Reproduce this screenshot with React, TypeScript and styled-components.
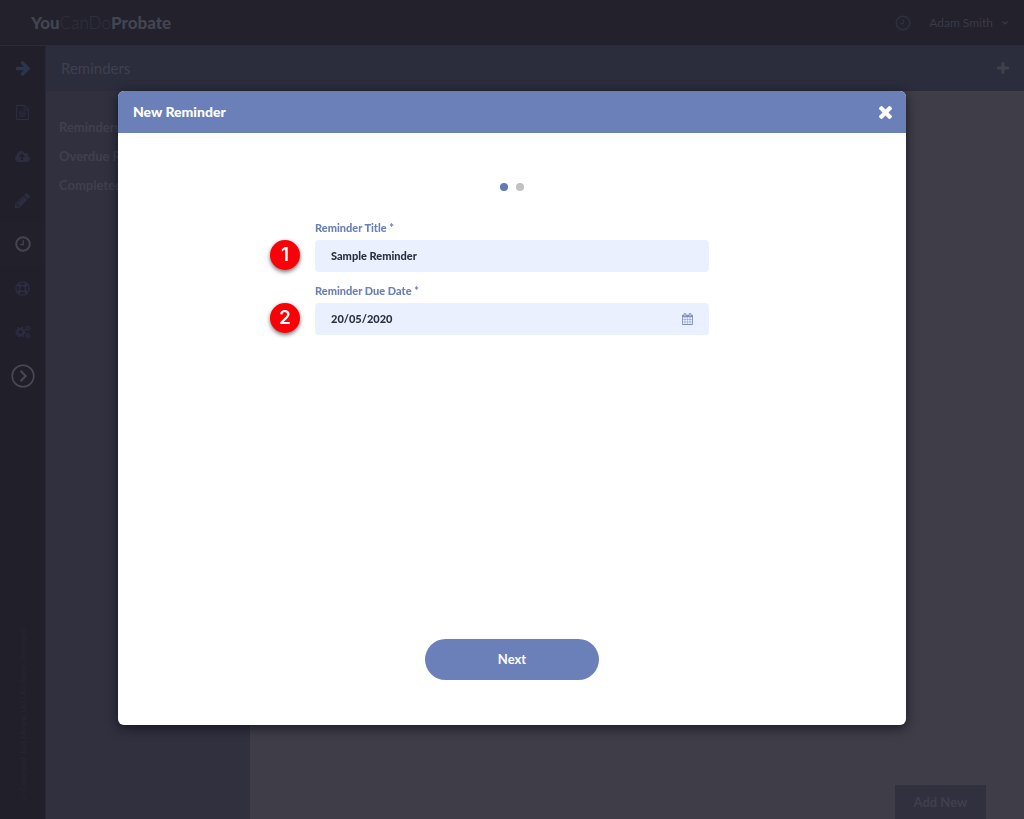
import React from "react";
import styled, { createGlobalStyle } from "styled-components";
import { FaRegLifeRing } from "react-icons/fa";

const GlobalStyle = createGlobalStyle`
  *, *::before, *::after { box-sizing: border-box; }
  html, body { margin: 0; height: 100%; }
  #root { height: 100%; }
  body {
    background: #3f3e48;
    color: #41404b;
    font-family: Lato, "Liberation Sans", sans-serif;
    font-size: 13px;
    line-height: 16px;
  }
  button, input { font: inherit; color: inherit; }
  button { border: 0; padding: 0; background: none; cursor: pointer; }
  svg { display: block; }
`;

const Page = styled.div`
  min-height: 100%;
  display: flex;
  flex-direction: column;
`;

const TopBar = styled.header`
  display: flex;
  align-items: center;
  justify-content: space-between;
  height: 46px;
  padding: 0 15px 0 31px;
  background: #22212c;
  border-bottom: 1px solid #2a2b3a;
`;

const Logo = styled.a`
  color: #454451;
  font-size: 17px;
  font-weight: 900;
  line-height: 20px;
  text-decoration: none;
`;

const LogoLight = styled.span`
  color: #33323e;
  font-weight: 300;
`;

const Account = styled.div`
  display: flex;
  align-items: center;
  gap: 18px;
`;

const AccountButton = styled.button`
  display: flex;
  align-items: center;
  gap: 8px;
  font-size: 12px;
  color: #3c3b47;
`;

const IconButton = styled.button<{ $color: string }>`
  display: flex;
  align-items: center;
  justify-content: center;
  color: ${(p) => p.$color};
`;

const Shell = styled.div`
  flex: 1;
  display: flex;
`;

const Rail = styled.nav`
  display: flex;
  flex-direction: column;
  width: 46px;
  background: #201f2a;
  border-right: 1px solid #282836;
`;

const RailItem = styled.a<{ $active?: boolean; $color?: string }>`
  display: flex;
  align-items: center;
  justify-content: center;
  height: 44px;
  color: ${(p) => p.$color ?? "#2b2d40"};
  background: ${(p) => (p.$active ? "#22212b" : "transparent")};
`;

const Copyright = styled.small`
  writing-mode: vertical-rl;
  transform: rotate(180deg);
  align-self: center;
  margin: auto 0 16px;
  color: #272632;
  font-size: 8px;
  line-height: 12px;
  white-space: nowrap;
`;

const Main = styled.main`
  flex: 1;
  display: flex;
  flex-direction: column;
`;

const TitleBar = styled.div`
  display: flex;
  align-items: center;
  justify-content: space-between;
  height: 45px;
  padding: 0 15px 2px;
  background: #2b2c3c;
`;

const PageTitle = styled.h1`
  margin: 0;
  color: #40404e;
  font-size: 15px;
  font-weight: 400;
  line-height: 20px;
`;

const Content = styled.div`
  flex: 1;
  display: flex;
`;

const SideMenu = styled.nav`
  display: flex;
  flex-direction: column;
  gap: 13px;
  width: 204px;
  padding: 28px 13px;
  background: #30303f;
`;

const SideLink = styled.a`
  color: #40404d;
  font-weight: 700;
  text-decoration: none;
`;

const Workspace = styled.section`
  flex: 1;
  display: flex;
  align-items: flex-end;
  justify-content: flex-end;
  padding-right: 38px;
  background: #3f3e48;
`;

const AddButton = styled.button`
  width: 91px;
  height: 34px;
  background: #30303f;
  color: #40404d;
  font-weight: 700;
`;

const Overlay = styled.div`
  position: fixed;
  inset: 0;
  display: flex;
  align-items: flex-start;
  justify-content: center;
  padding: 91px 118px 94px;
`;

const Dialog = styled.section`
  display: flex;
  flex-direction: column;
  width: 100%;
  height: 100%;
  overflow: hidden;
  border-radius: 6px;
  background: #fff;
  box-shadow: 0 3px 12px rgba(10, 10, 20, 0.7);
`;

const DialogHeader = styled.header`
  display: flex;
  align-items: center;
  justify-content: space-between;
  height: 42px;
  padding: 0 14px 0 15px;
  background: #6b80b8;
  color: #fff;
`;

const DialogTitle = styled.h2`
  margin: 0;
  font-size: 14px;
  font-weight: 900;
  line-height: 20px;
`;

const DialogBody = styled.form`
  flex: 1;
  display: flex;
  flex-direction: column;
  align-items: center;
  padding: 50px 0 45px;
`;

const Steps = styled.div`
  display: flex;
  gap: 8px;
`;

const Dot = styled.span<{ $active?: boolean }>`
  width: 8px;
  height: 8px;
  border-radius: 50%;
  background: ${(p) => (p.$active ? "#6179b8" : "#c1c1c3")};
`;

const Fields = styled.div`
  display: flex;
  flex-direction: column;
  gap: 11px;
  width: 50%;
  margin-top: 29px;
`;

const Field = styled.div`
  position: relative;
  display: flex;
  flex-direction: column;
  gap: 4px;
`;

const Label = styled.label`
  color: #6b80b8;
  font-size: 11px;
  font-weight: 900;
`;

const InputBox = styled.div`
  display: flex;
  align-items: center;
  height: 32px;
  padding: 0 16px;
  border-radius: 4px;
  background: #eaf0fd;
  color: #2d3040;
`;

const Input = styled.input`
  flex: 1;
  min-width: 0;
  padding: 0;
  border: 0;
  outline: 0;
  background: transparent;
  font-size: 11px;
  font-weight: 900;
`;

const Marker = styled.span`
  position: absolute;
  left: -45px;
  bottom: 2px;
  display: flex;
  align-items: center;
  justify-content: center;
  width: 30px;
  height: 30px;
  border-radius: 50%;
  background: #fb0007;
  color: #fff;
  font-family: Inter, "Liberation Sans", sans-serif;
  font-size: 19px;
  font-weight: 600;
  line-height: 24px;
  box-shadow: 0 2px 4px rgba(0, 0, 0, 0.55);
`;

const NextButton = styled.button`
  width: 174px;
  height: 41px;
  margin-top: auto;
  padding-bottom: 2px;
  border-radius: 21px;
  background: #6b80b8;
  color: #fff;
  font-weight: 700;
`;

type GlyphProps = { box: string; width: number; height: number; d: string };

const Glyph = ({ box, width, height, d }: GlyphProps) => (
  <svg viewBox={box} width={width} height={height} fill="currentColor" aria-hidden="true">
    <path d={d} />
  </svg>
);

const glyphs = {
  arrow: "M1472 960q0 54-37 91l-651 651q-39 37-91 37-51 0-90-37l-75-75q-38-38-38-91t38-91l293-293H117q-52 0-84.5-37.5T0 1024V896q0-53 32.5-90.5T117 768h704L528 474q-38-36-38-90t38-90l75-75q38-38 90-38 53 0 91 38l651 651q37 35 37 90z",
  file: "M1468 380q28 28 48 76t20 88v1152q0 40-28 68t-68 28H96q-40 0-68-28t-28-68V96q0-40 28-68T96 0h896q40 0 88 20t76 48zm-444-244v376h376q-10-29-22-41l-313-313q-12-12-41-22zm384 1528V640H992q-40 0-68-28t-28-68V128H128v1536h1280zM384 800q0-14 9-23t23-9h704q14 0 23 9t9 23v64q0 14-9 23t-23 9H416q-14 0-23-9t-9-23v-64zm736 224q14 0 23 9t9 23v64q0 14-9 23t-23 9H416q-14 0-23-9t-9-23v-64q0-14 9-23t23-9h704zm0 256q14 0 23 9t9 23v64q0 14-9 23t-23 9H416q-14 0-23-9t-9-23v-64q0-14 9-23t23-9h704z",
  cloud: "M1280 928q0-14-9-23L919 553q-9-9-23-9t-23 9L522 904q-10 12-10 24 0 14 9 23t23 9h224v352q0 13 9.500 22.500t22.500 9.500h192q13 0 22.500-9.500t9.500-22.500V960h224q13 0 22.500-9.500t9.500-22.500zm640 288q0 159-112.500 271.500T1536 1600H448q-185 0-316.500-131.500T0 1152q0-130 70-240t188-165q-2-30-2-43 0-212 150-362t362-150q156 0 285.500 87t188.500 231q71-62 166-62 106 0 181 75t75 181q0 76-41 138 130 31 213.500 135.500T1920 1216z",
  pencil: "M363 1536l91-91-235-235-91 91v107h128v128h107zm523-928q0-22-22-22-10 0-17 7l-542 542q-7 7-7 17 0 22 22 22 10 0 17-7l542-542q7-7 7-17zm-54-192l416 416-832 832H0v-416zm683 96q0 53-37 90l-166 166-416-416 166-165q36-38 90-38 53 0 91 38l235 234q37 39 37 91z",
  times: "M1298 1322q0 40-28 68l-136 136q-28 28-68 28t-68-28l-294-294-294 294q-28 28-68 28t-68-28L138 1390q-28-28-28-68t28-68l294-294-294-294q-28-28-28-68t28-68l136-136q28-28 68-28t68 28l294 294 294-294q28-28 68-28t68 28l136 136q28 28 28 68t-28 68L976 960l294 294q28 28 28 68z",
  calendar: "M128 1664h288v-288H128v288zm352 0h320v-288H480v288zM128 1312h288V992H128v320zm352 0h320V992H480v320zM128 928h288V640H128v288zm736 736h320v-288H864v288zM480 928h320V640H480v288zm768 736h288v-288h-288v288zM864 1312h320V992H864v320zM512 448V160q0-13-9.500-22.500T480 128h-64q-13 0-22.500 9.500T384 160v288q0 13 9.500 22.500T416 480h64q13 0 22.500-9.500T512 448zm736 864h288V992h-288v320zM864 928h320V640H864v288zm384 0h288V640h-288v288zm32-480V160q0-13-9.500-22.500T1248 128h-64q-13 0-22.500 9.500T1152 160v288q0 13 9.500 22.500t22.500 9.500h64q13 0 22.500-9.500t9.500-22.500zm384-64v1280q0 52-38 90t-90 38H128q-52 0-90-38t-38-90V384q0-52 38-90t90-38h128v-96q0-66 47-113T416 0h64q66 0 113 47t47 113v96h384v-96q0-66 47-113T1184 0h64q66 0 113 47t47 113v96h128q52 0 90 38t38 90z",
};

const Clock = ({ stroke }: { stroke: number }) => (
  <svg width="16" height="16" viewBox="0 0 16 16" fill="none" stroke="currentColor" strokeWidth={stroke} aria-hidden="true">
    <circle cx="8" cy="8" r="6.800" />
    <path d="M8.200 4.300V8.600H5.200" strokeWidth="1.300" />
  </svg>
);

const Cogs = () => (
  <svg width="16" height="14" viewBox="0 0 16 14" fill="none" stroke="currentColor" aria-hidden="true">
    <circle cx="5.500" cy="7" r="3.200" strokeWidth="2.200" />
    <circle cx="5.500" cy="7" r="4.800" strokeWidth="1.400" strokeDasharray="1.900 1.870" />
    <circle cx="12.800" cy="3" r="1.600" strokeWidth="1.300" />
    <circle cx="12.800" cy="3" r="2.500" strokeWidth="0.800" strokeDasharray="1.300 1.300" />
    <circle cx="12.800" cy="11" r="1.600" strokeWidth="1.300" />
    <circle cx="12.800" cy="11" r="2.500" strokeWidth="0.800" strokeDasharray="1.300 1.300" />
  </svg>
);

const CircleChevron = () => (
  <svg width="24" height="24" viewBox="0 0 24 24" fill="none" stroke="currentColor" strokeWidth="1.600" aria-hidden="true">
    <circle cx="12" cy="12" r="10.800" />
    <path d="M9.500 6.800l5.200 5.200-5.200 5.200" strokeWidth="2" />
  </svg>
);

const Plus = () => (
  <svg width="12" height="12" viewBox="0 0 12 12" fill="currentColor" aria-hidden="true">
    <rect x="4.500" width="3" height="12" rx="0.800" />
    <rect y="4.500" width="12" height="3" rx="0.800" />
  </svg>
);

const ChevronDown = () => (
  <svg width="8" height="8" viewBox="0 0 8 8" fill="none" stroke="currentColor" strokeWidth="1.200" aria-hidden="true">
    <path d="M1.500 2.500L4 5l2.500-2.500" />
  </svg>
);

export default function App() {
  return (
    <>
      <GlobalStyle />
      <Page>
        <TopBar>
          <Logo href="#home">
            You<LogoLight>CanDo</LogoLight>Probate
          </Logo>
          <Account>
            <IconButton $color="#30303e" aria-label="Recent activity">
              <Clock stroke={1.4} />
            </IconButton>
            <AccountButton>
              Adam Smith
              <ChevronDown />
            </AccountButton>
          </Account>
        </TopBar>
        <Shell>
          <Rail aria-label="Main">
            <RailItem href="#next" aria-label="Next step" $color="#2b354d">
              <Glyph box="0 181 1472 1558" width={14} height={15} d={glyphs.arrow} />
            </RailItem>
            <RailItem href="#documents" aria-label="Documents">
              <Glyph box="0 0 1536 1792" width={13} height={15} d={glyphs.file} />
            </RailItem>
            <RailItem href="#uploads" aria-label="Uploads">
              <Glyph box="0 192 1920 1408" width={15} height={11} d={glyphs.cloud} />
            </RailItem>
            <RailItem href="#notes" aria-label="Notes">
              <Glyph box="0 149 1515 1515" width={15} height={15} d={glyphs.pencil} />
            </RailItem>
            <RailItem href="#reminders" aria-label="Reminders" $active $color="#454450">
              <Clock stroke={2} />
            </RailItem>
            <RailItem href="#help" aria-label="Help">
              <FaRegLifeRing size={15} />
            </RailItem>
            <RailItem href="#settings" aria-label="Settings">
              <Cogs />
            </RailItem>
            <RailItem href="#expand" aria-label="Expand menu" $color="#4a4954">
              <CircleChevron />
            </RailItem>
            <Copyright>© Copyright Just Mining Ltd | All Rights Reserved</Copyright>
          </Rail>
          <Main>
            <TitleBar>
              <PageTitle>Reminders</PageTitle>
              <IconButton $color="#41404b" aria-label="Add">
                <Plus />
              </IconButton>
            </TitleBar>
            <Content>
              <SideMenu aria-label="Reminder lists">
                <SideLink href="#all">Reminders</SideLink>
                <SideLink href="#overdue">Overdue Reminders</SideLink>
                <SideLink href="#completed">Completed Reminders</SideLink>
              </SideMenu>
              <Workspace>
                <AddButton>Add New</AddButton>
              </Workspace>
            </Content>
          </Main>
        </Shell>
      </Page>
      <Overlay>
        <Dialog role="dialog" aria-modal="true" aria-labelledby="dialog-title">
          <DialogHeader>
            <DialogTitle id="dialog-title">New Reminder</DialogTitle>
            <IconButton $color="#fff" aria-label="Close">
              <Glyph box="110 366 1188 1188" width={13} height={13} d={glyphs.times} />
            </IconButton>
          </DialogHeader>
          <DialogBody onSubmit={(e) => e.preventDefault()}>
            <Steps aria-label="Step 1 of 2">
              <Dot $active />
              <Dot />
            </Steps>
            <Fields>
              <Field>
                <Label htmlFor="title">Reminder Title *</Label>
                <InputBox>
                  <Input id="title" type="text" defaultValue="Sample Reminder" />
                </InputBox>
                <Marker>1</Marker>
              </Field>
              <Field>
                <Label htmlFor="due">Reminder Due Date *</Label>
                <InputBox>
                  <Input id="due" type="text" defaultValue="20/05/2020" />
                  <IconButton type="button" $color="#7d90c3" aria-label="Pick a date">
                    <Glyph box="0 0 1664 1792" width={11} height={12} d={glyphs.calendar} />
                  </IconButton>
                </InputBox>
                <Marker>2</Marker>
              </Field>
            </Fields>
            <NextButton type="submit">Next</NextButton>
          </DialogBody>
        </Dialog>
      </Overlay>
    </>
  );
}
